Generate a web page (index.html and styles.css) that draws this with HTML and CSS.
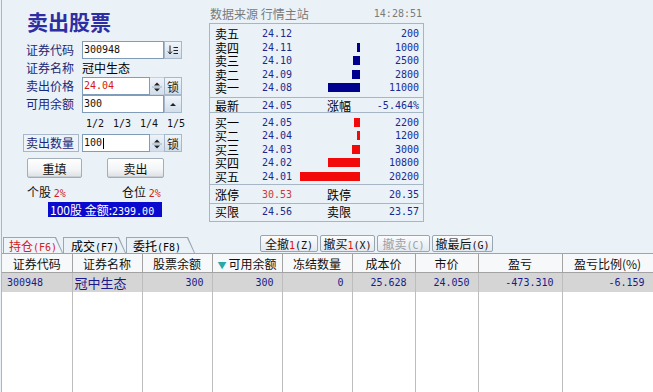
FILE: index.html
```html
<!DOCTYPE html>
<html lang="zh-CN">
<head>
<meta charset="utf-8">
<title>卖出股票</title>
<link rel="stylesheet" href="styles.css">
</head>
<body>
<div class="app">
  <div class="top">
    <section class="order">
      <h1 class="title">卖出股票</h1>
      <div class="row">
        <span class="lbl">证券代码</span>
        <span class="inp w-full num">300948</span>
        <span class="sbtn"><svg width="12" height="10" viewBox="0 0 12 10"><path d="M3 0.5V8.5M1 6.5L3 9L5 6.5" fill="none" stroke="#222" stroke-width="1"/><path d="M6.5 2.5H11M6.5 5.5H11M6.5 8.5H11" stroke="#222" stroke-width="1"/></svg></span>
      </div>
      <div class="row">
        <span class="lbl">证券名称</span>
        <span class="val">冠中生态</span>
      </div>
      <div class="row">
        <span class="lbl">卖出价格</span>
        <span class="inp w-short num red">24.04</span>
        <span class="spin"><svg width="14" height="18" viewBox="0 0 14 18"><path d="M4 7.5L7 4.5L10 7.5Z" fill="#222"/><path d="M2 9H12" stroke="#9fb1c3"/><path d="M4 10.5L7 13.5L10 10.5Z" fill="#222"/></svg></span>
        <span class="sbtn">锁</span>
      </div>
      <div class="row">
        <span class="lbl">可用余额</span>
        <span class="inp w-full num">300</span>
        <span class="sbtn"><svg width="10" height="8" viewBox="0 0 10 8"><path d="M2 6L5 3L8 6Z" fill="#222"/></svg></span>
      </div>
      <div class="fracs num"><span>1/2</span><span>1/3</span><span>1/4</span><span>1/5</span></div>
      <div class="row qty-row">
        <span class="lbl boxed">卖出数量</span>
        <span class="inp w-short num">100<i class="caret"></i></span>
        <span class="spin"><svg width="14" height="18" viewBox="0 0 14 18"><path d="M4 7.5L7 4.5L10 7.5Z" fill="#222"/><path d="M2 9H12" stroke="#9fb1c3"/><path d="M4 10.5L7 13.5L10 10.5Z" fill="#222"/></svg></span>
        <span class="sbtn">锁</span>
      </div>
      <div class="actions">
        <button class="btn reset">重填</button>
        <button class="btn sell">卖出</button>
      </div>
      <div class="ratio">
        <span class="r1">个股 <em class="num">2%</em></span>
        <span>仓位 <em class="num">2%</em></span>
      </div>
      <div class="amount">100股 金额:<span class="num">2399.00</span></div>
    </section>

    <section class="quote">
      <div class="q-head"><span>数据来源 行情主站</span><span class="num">14:28:51</span></div>
      <div class="q-box">
        <div class="q-sec sells">
          <div class="lv"><span>卖五</span><span class="p num">24.12</span><span class="bc"></span><span class="v num">200</span></div>
          <div class="lv"><span>卖四</span><span class="p num">24.11</span><span class="bc"><i class="bar blue" style="width:3px"></i></span><span class="v num">1000</span></div>
          <div class="lv"><span>卖三</span><span class="p num">24.10</span><span class="bc"><i class="bar blue" style="width:7px"></i></span><span class="v num">2500</span></div>
          <div class="lv"><span>卖二</span><span class="p num">24.09</span><span class="bc"><i class="bar blue" style="width:8px"></i></span><span class="v num">2800</span></div>
          <div class="lv"><span>卖一</span><span class="p num">24.08</span><span class="bc"><i class="bar blue" style="width:32px"></i></span><span class="v num">11000</span></div>
        </div>
        <div class="q-sec one last">
          <span>最新</span><span class="p num">24.05</span><span>涨幅</span><span class="v num">-5.464%</span>
        </div>
        <div class="q-sec buys">
          <div class="lv"><span>买一</span><span class="p num">24.05</span><span class="bc"><i class="bar red" style="width:6px"></i></span><span class="v num">2200</span></div>
          <div class="lv"><span>买二</span><span class="p num">24.04</span><span class="bc"><i class="bar red" style="width:3px"></i></span><span class="v num">1200</span></div>
          <div class="lv"><span>买三</span><span class="p num">24.03</span><span class="bc"><i class="bar red" style="width:8px"></i></span><span class="v num">3000</span></div>
          <div class="lv"><span>买四</span><span class="p num">24.02</span><span class="bc"><i class="bar red" style="width:32px"></i></span><span class="v num">10800</span></div>
          <div class="lv"><span>买五</span><span class="p num">24.01</span><span class="bc"><i class="bar red" style="width:60px"></i></span><span class="v num">20200</span></div>
        </div>
        <div class="q-sec one limit">
          <span>涨停</span><span class="p num up">30.53</span><span>跌停</span><span class="v num">20.35</span>
        </div>
        <div class="q-sec one bound">
          <span>买限</span><span class="p num">24.56</span><span>卖限</span><span class="v num">23.57</span>
        </div>
      </div>
    </section>
  </div>

  <div class="toolbar">
    <div class="tabs">
      <div class="tab t1 active"><span>持仓<b class="num">(F6)</b></span></div>
      <div class="tab t2"><span>成交<b class="num">(F7)</b></span></div>
      <div class="tab t3"><span>委托<b class="num">(F8)</b></span></div>
    </div>
    <div class="tools">
      <button class="tbtn b1">全撤<em>1</em><b class="num">(Z)</b></button>
      <button class="tbtn b2">撤买<em>1</em><b class="num">(X)</b></button>
      <button class="tbtn b3 off">撤卖<b class="num">(C)</b></button>
      <button class="tbtn b4">撤最后<b class="num">(G)</b></button>
    </div>
  </div>

  <table class="grid">
    <thead>
      <tr>
        <th class="c1">证券代码</th>
        <th class="c2">证券名称</th>
        <th class="c3">股票余额</th>
        <th class="c4"><span class="sort">▼</span>可用余额</th>
        <th class="c5">冻结数量</th>
        <th class="c6">成本价</th>
        <th class="c7">市价</th>
        <th class="c8">盈亏</th>
        <th class="c9">盈亏比例(%)</th>
      </tr>
    </thead>
    <tbody>
      <tr class="sel">
        <td class="code num">300948</td>
        <td class="name">冠中生态</td>
        <td class="n num">300</td>
        <td class="n num">300</td>
        <td class="n num">0</td>
        <td class="n num">25.628</td>
        <td class="n num">24.050</td>
        <td class="n num">-473.310</td>
        <td class="n num">-6.159</td>
      </tr>
      <tr class="fill">
        <td></td><td></td><td></td><td></td><td></td><td></td><td></td><td></td><td></td>
      </tr>
    </tbody>
  </table>
</div>
</body>
</html>
```

FILE: styles.css
```css
* { box-sizing: border-box; margin: 0; padding: 0; }
html, body { width: 653px; height: 392px; overflow: hidden; }
body {
  background: #EAF2F7;
  font-family: "Noto Sans CJK SC", "Noto Sans", sans-serif;
  font-size: 12px;
  color: #000;
}
.num { font-family: "DejaVu Sans Mono", "Liberation Mono", monospace; font-size: 10px; font-style: normal; font-weight: normal; }

.app {
  margin-left: 1px;
  border-left: 1px solid #A9B8C6;
  height: 392px;
  display: flex;
  flex-direction: column;
}
.top { display: flex; height: 233px; flex: none; }

/* order form */
.order { width: 207px; padding-left: 24px; }
.title {
  font-size: 21px; font-weight: 700; line-height: 24px;
  margin: 9px 0 8px 1px; color: #2E2EA3;
}
.row { display: flex; align-items: center; height: 18px; }
.lbl { width: 56px; color: #1C2878; line-height: 18px; }
.lbl.boxed {
  margin-left: -3px; margin-right: 3px; height: 18px;
  border: 1px solid #A8B8C8; background: #EEF3F8;
  padding-left: 2px; line-height: 16px;
}
.val { line-height: 18px; }
.inp {
  height: 18px; border: 1px solid #7F9DB9; background: #fff;
  padding-left: 1px; line-height: 16px; color: #111;
  display: flex; align-items: center;
}
.inp.red { color: #D01818; }
.w-full { width: 82px; }
.w-short { width: 68px; }
.caret { display: inline-block; width: 1px; height: 11px; background: #000; margin-left: 1px; }
.spin {
  width: 14px; height: 18px; display: flex;
  background: linear-gradient(#EEF3FA, #D3DFEC);
  border-top: 1px solid #C4D0DC; border-bottom: 1px solid #C4D0DC;
}
.sbtn {
  width: 18px; height: 18px; display: flex; align-items: center; justify-content: center;
  background: linear-gradient(#F0F5FB, #D2DEEB);
  border: 1px solid #A7B8CA; color: #222; font-size: 12px;
}
.fracs { display: flex; gap: 10px; height: 16px; line-height: 16px; margin-top: 3px; padding-left: 60px; color: #111; }
.fracs span { width: 17px; }
.qty-row { margin-top: 2px; }
.actions { display: flex; margin-top: 6px; height: 20px; }
.btn {
  height: 20px; font-family: inherit; font-size: 12px; color: #111;
  border: 1px solid #A4AEB8; border-radius: 2px;
  background: linear-gradient(#FFFFFF, #F3F4F6 60%, #DCE0E4);
  box-shadow: inset 0 -1px 0 #C9CED4;
}
.reset { width: 55px; margin-left: 1px; }
.sell { width: 57px; margin-left: 25px; }
.ratio { display: flex; margin-top: 7px; height: 14px; line-height: 14px; padding-left: 1px; color: #111; }
.ratio .r1 { width: 95px; }
.ratio em { color: #D02020; }
.amount {
  margin: 3px 0 0 22px; width: 114px; height: 15px;
  background: #0A0ACF; color: #fff; line-height: 15px;
  padding-left: 2px; white-space: nowrap; font-size: 12px;
}
.amount .num { font-size: 10px; }

/* quote */
.quote { width: 215px; display: flex; flex-direction: column; }
.q-head {
  height: 23px; padding: 7px 2px 0 1px; line-height: 14px;
  display: flex; justify-content: space-between; color: #7A7A7A;
}
.q-box { border: 1px solid #A7B6C4; height: 199px; display: flex; flex-direction: column; }
.q-sec { border-top: 1px solid #A7B6C4; padding: 0 4px 0 5px; }
.q-sec:first-child { border-top: none; }
.sells { padding-top: 3px; padding-bottom: 2px; }
.buys { padding-top: 3px; padding-bottom: 1px; }
.lv {
  display: grid; grid-template-columns: 47px 38px 60px 1fr;
  height: 13.5px; line-height: 13.5px; align-items: center;
}
.lv span { line-height: 13.5px; }
.p { color: #1B2A8E; }
.v { color: #1B2A8E; text-align: right; }
.bc { display: flex; justify-content: flex-end; align-items: center; height: 13.5px; }
.bar { display: block; height: 9px; }
.bar.blue { background: #00008E; }
.bar.red { background: #F20A0A; }
.one {
  display: grid; grid-template-columns: 47px 65px 40px 1fr; align-items: center;
}
.last { height: 15px; line-height: 15px; }
.limit { height: 19px; line-height: 19px; }
.bound { height: 16px; line-height: 16px; }
.up { color: #C83A3A; }

/* toolbar */
.toolbar { display: flex; align-items: flex-end; height: 20px; flex: none; padding-left: 1px; }
.tabs { display: flex; height: 16px; }
.tab {
  height: 16px; background: #9AA7B4; padding: 1px 1px 0 1px;
  clip-path: polygon(0 0, calc(100% - 7px) 0, 100% 100%, 0 100%);
}
.tab span {
  display: block; height: 15px; background: #EAF2F7; line-height: 15px;
  padding-left: 5px; white-space: nowrap;
  clip-path: polygon(0 0, calc(100% - 7px) 0, 100% 100%, 0 100%);
}
.tab b { font-weight: normal; }
.t1 { width: 60px; }
.t2 { width: 63px; }
.t2 span { padding-left: 7px; }
.t3 { width: 69px; }
.t3 span { padding-left: 6px; }
.active span { color: #D42020; background: #EEF4F9; }
.tools { display: flex; gap: 2px; margin-left: 65px; margin-bottom: 1px; }
.tbtn {
  height: 17px; font-family: inherit; font-size: 12px; color: #111; line-height: 15px;
  border: 1px solid #98A6B4; border-radius: 2px;
  background: linear-gradient(#FBFCFD, #E3E9EF);
  white-space: nowrap; padding: 0;
}
.tbtn em { font-style: normal; color: #E01010; font-family: "DejaVu Sans Mono", monospace; font-size: 10px; }
.tbtn b { font-weight: normal; }
.tbtn.off { color: #9AA0A8; }
.b1 { width: 58px; }
.b2 { width: 55px; }
.b3 { width: 53px; }
.b4 { width: 61px; }

/* grid */
.grid {
  width: 651px; table-layout: fixed; border-collapse: collapse;
  flex: 1; background: #fff;
}
.grid th {
  height: 19px; font-weight: normal; font-size: 12px; color: #111;
  background: #F6F8FA; border-top: 1px solid #A3A3A3; border-bottom: 1px solid #A3A3A3;
  border-right: 1px solid #A3A3A3; text-align: center; white-space: nowrap; overflow: hidden;
}
.c1, .c2, .c3, .c4, .c5 { width: 70px; }
.c6, .c7 { width: 63px; }
.c8 { width: 84px; }
.c9 { width: 91px; }
.sort { color: #2AA8A8; font-size: 9px; margin-right: 2px; }
.grid td { border-right: 1px solid #BDBDBD; }
.sel td { height: 18px; background: #D5D5D5; color: #1A1A8E; padding: 0 8px 0 5px; }
.sel .n { text-align: right; }
.sel .name { font-size: 13px; padding-left: 2px; }
.fill td { background: #fff; }
```
